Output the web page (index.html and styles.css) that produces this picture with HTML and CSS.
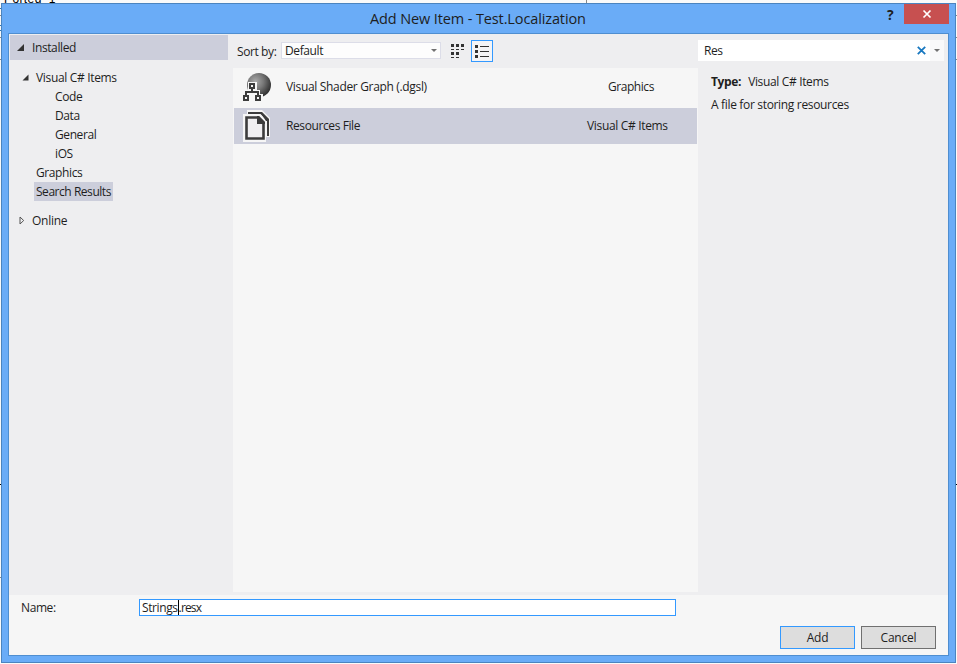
FILE: index.html
```
<!DOCTYPE html>
<html lang="en">
<head>
    <meta charset="utf-8">
    <title>Add New Item - Test.Localization</title>
    <link rel="stylesheet" href="styles.css">
</head>
<body>
    <!-- Window behind the dialog -->
    <div class="backdrop">
        <span class="backdrop-text">Ported_1</span>
        <svg class="backdrop-lines" width="957" height="664" viewBox="0 0 957 664" shape-rendering="crispEdges">
            <path fill="#888" d="M586 0h1v3h-1zM0 15h1v1h-1zM0 37h1v1h-1zM0 59h1v1h-1zM0 577h1v1h-1zM956 15h1v1h-1zM956 37h1v1h-1zM956 59h1v1h-1z"/>
            <path fill="#2f78b5" d="M0 8h1v1h-1zM0 25h1v1h-1zM0 30h1v1h-1z"/>
            <path fill="#000" d="M0 484h1v1h-1zM956 484h1v1h-1z"/>
        </svg>
    </div>

    <div class="dialog">
        <div class="titlebar">
            <h1 class="title">Add New Item - Test.Localization</h1>
            <div class="window-buttons">
                <span class="help">?</span>
                <button class="close" aria-label="Close">
                    <svg width="10" height="10" viewBox="0 0 10 10" stroke="#fff" stroke-width="1.7"><path d="M1.5 1.5l7 7M8.500 1.500l-7 7"/></svg>
                </button>
            </div>
        </div>

        <div class="content">
            <div class="main">
                <div class="sidebar">
                    <div class="section-header">
                        <svg class="arrow" width="7" height="7" viewBox="0 0 7 7"><path fill="#333" d="M7 0v7H0z"/></svg>
                        <span class="label">Installed</span>
                    </div>
                    <ul class="tree">
                        <li class="node level-1">
                            <svg class="arrow" width="7" height="7" viewBox="0 0 7 7"><path fill="#333" d="M6.500 .5v6h-6z"/></svg>
                            <span class="label csharp">Visual C# Items</span>
                        </li>
                        <li class="node level-2"><span class="label">Code</span></li>
                        <li class="node level-2"><span class="label">Data</span></li>
                        <li class="node level-2"><span class="label">General</span></li>
                        <li class="node level-2"><span class="label">iOS</span></li>
                        <li class="node level-1 leaf"><span class="label">Graphics</span></li>
                        <li class="node level-1 leaf"><span class="label selected">Search Results</span></li>
                    </ul>
                    <div class="online">
                        <svg width="6" height="9" viewBox="0 0 6 9"><path fill="none" stroke="#555" d="M1 1v7l3.700-3.500z"/></svg>
                        <span class="label">Online</span>
                    </div>
                </div>

                <div class="templates">
                    <div class="toolbar">
                        <span class="sort-label">Sort by:</span>
                        <div class="sort-select">
                            <span>Default</span>
                            <svg width="6" height="3" viewBox="0 0 6 3"><path fill="#717171" d="M0 0h6L3 3z"/></svg>
                        </div>
                        <button class="view-button medium" aria-label="Medium icons">
                            <svg width="14" height="14" viewBox="0 0 14 14" fill="#333" shape-rendering="crispEdges">
                                <path d="M0 0h3v3H0zM5 0h3v3H5zM10 0h3v3h-3zM0 5h3v1H0zM5 5h3v1H5zM10 5h3v1h-3zM0 8h3v3H0zM5 8h3v3H5zM0 13h3v1H0zM5 13h3v1H5z"/>
                            </svg>
                        </button>
                        <button class="view-button active" aria-label="Small icons">
                            <svg width="14" height="13" viewBox="0 0 14 13" fill="#333" shape-rendering="crispEdges">
                                <path d="M0 0h3v3H0zM5 1h9v1H5zM0 5h3v3H0zM5 6h9v1H5zM0 10h3v3H0zM5 11h9v1H5z"/>
                            </svg>
                        </button>
                    </div>
                    <div class="template-list">
                        <div class="template">
                            <svg class="template-icon" width="30" height="32" viewBox="0 0 30 32">
                                <defs>
                                    <radialGradient id="sphere" cx=".35" cy=".35" r=".68">
                                        <stop offset="0" stop-color="#aaa"/>
                                        <stop offset=".5" stop-color="#777"/>
                                        <stop offset="1" stop-color="#333"/>
                                    </radialGradient>
                                </defs>
                                <circle cx="16" cy="14" r="12" fill="url(#sphere)"/>
                                <path fill="#f6f6f6" d="M5 11h9v8h3v4h3v8H0v-8h1v-4h4z"/>
                                <path fill="#f6f6f6" stroke="#3c3c3c" stroke-width="2" d="M7 13h4v4H7zM1 25h4v4H1zM13 25h4v4h-4z"/>
                                <path fill="none" stroke="#3c3c3c" stroke-width="2" d="M9 18v3M3 24v-3h12v3"/>
                            </svg>
                            <span class="template-name">Visual Shader Graph (.dgsl)</span>
                            <span class="template-type graphics">Graphics</span>
                        </div>
                        <div class="template selected">
                            <svg class="template-icon" width="30" height="32" viewBox="0 0 30 32">
                                <path fill="#f6f6f6" d="M4 0h15l8 8v19h-4v5H0V4h4z"/>
                                <path fill="none" stroke="#3c3c3c" stroke-width="2" d="M5 3h13l7 7v16"/>
                                <path fill="#3c3c3c" d="M17 2h2l7 7v2h-3z"/>
                                <path fill="#f0eff1" stroke="#3c3c3c" stroke-width="2.600" d="M3.500 7.500h12l5 5v16h-17z"/>
                                <path fill="#3c3c3c" d="M14 6h2l6 6v2h-8z"/>
                            </svg>
                            <span class="template-name resources">Resources File</span>
                            <span class="template-type">Visual C# Items</span>
                        </div>
                    </div>
                </div>

                <div class="details">
                    <div class="search">
                        <span class="search-text">Res</span>
                        <svg class="clear" width="9" height="9" viewBox="0 0 9 9" stroke="#1878c0" stroke-width="1.8"><path d="M.8.8l7.400 7.400M8.200.8L.8 8.200"/></svg>
                        <div class="search-drop">
                            <svg width="6" height="3" viewBox="0 0 6 3"><path fill="#717171" d="M0 0h6L3 3z"/></svg>
                        </div>
                    </div>
                    <p class="type"><b>Type:</b><span>Visual C# Items</span></p>
                    <p class="description">A file for storing resources</p>
                </div>
            </div>

            <div class="footer">
                <div class="name-row">
                    <span class="name-label">Name:</span>
                    <div class="name-input"><span>Strings</span><i class="caret"></i><span class="extension">.resx</span></div>
                </div>
                <div class="actions">
                    <button class="button primary">Add</button>
                    <button class="button">Cancel</button>
                </div>
            </div>
        </div>
    </div>
</body>
</html>
```
FILE: styles.css
```
* {
    box-sizing: border-box;
}

body {
    margin: 0;
    width: 957px;
    height: 664px;
    padding: 3px 0 0 1px;
    overflow: hidden;
    background: #f4f4f4;
    color: #1e1e1e;
    font-family: "Open Sans", "Noto Sans", sans-serif;
    font-size: 12px;
    letter-spacing: -0.4px;
    white-space: nowrap;
}

button {
    padding: 0;
    border: none;
    font: inherit;
    letter-spacing: inherit;
    color: inherit;
}

svg {
    display: block;
    flex: none;
}

ul, p, h1 {
    margin: 0;
    padding: 0;
    list-style: none;
}

.backdrop {
    position: absolute;
    top: 0;
    left: 0;
    width: 957px;
    height: 664px;
    overflow: hidden;
    background: #fafafa;
}

.backdrop-text {
    position: absolute;
    top: -9px;
    left: 4px;
    color: #000;
    font: 12px/16px "Liberation Sans", sans-serif;
    letter-spacing: 0.4px;
}

.backdrop-lines {
    position: absolute;
    top: 0;
    left: 0;
}

.dialog {
    position: relative;
    display: flex;
    flex-direction: column;
    width: 955px;
    height: 660px;
    padding: 0 6px 6px;
    border: 1px solid #4b84bf;
    background: #6aacf7;
}

.titlebar {
    display: flex;
    height: 29px;
    flex: none;
    padding-left: 362px;
}

.title {
    font-size: 14.5px;
    font-weight: normal;
    line-height: 30px;
    letter-spacing: -0.12px;
}

.window-buttons {
    display: flex;
    align-items: flex-start;
    margin-left: auto;
}

.help {
    width: 17px;
    font-size: 14px;
    font-weight: bold;
    line-height: 21px;
}

.close {
    display: flex;
    align-items: center;
    justify-content: center;
    width: 45px;
    height: 20px;
    background: #c75050;
}

.content {
    display: flex;
    flex: 1;
    flex-direction: column;
    border: 1px solid #4f8ed0;
    background: #eeeef0;
}

.main {
    display: flex;
    height: 561px;
}

.sidebar {
    width: 219px;
    padding: 1px 0 0 1px;
}

.section-header {
    display: flex;
    align-items: center;
    gap: 8px;
    height: 25px;
    padding-left: 7px;
    background: #cccedb;
}

.tree {
    padding-top: 8px;
}

.node {
    display: flex;
    align-items: center;
    height: 19px;
}

.level-1 {
    gap: 5px;
    padding-left: 12px;
}

.leaf {
    padding-left: 24px;
}

.level-2 {
    padding-left: 43px;
}

.node .label {
    padding: 0 2px;
    line-height: 19px;
}

.node .csharp {
    letter-spacing: -0.33px;
}

.node .selected {
    width: 79px;
    background: #cccedb;
    letter-spacing: -0.46px;
}

.online {
    display: flex;
    align-items: center;
    gap: 7px;
    height: 19px;
    margin-top: 10px;
    padding-left: 9px;
    letter-spacing: -0.25px;
}

.templates {
    width: 470px;
    padding: 6px 0 0 5px;
}

.toolbar {
    display: flex;
    height: 22px;
    padding-left: 4px;
}

.sort-label {
    width: 44px;
    line-height: 24px;
}

.sort-select {
    display: flex;
    align-items: center;
    justify-content: space-between;
    width: 160px;
    height: 17px;
    margin: 2px 5px 0 0;
    padding: 0 3px;
    border: 1px solid #dcdde8;
    background: #fdfdfd;
}

.view-button {
    display: flex;
    align-items: center;
    justify-content: center;
    width: 22px;
    height: 22px;
    margin-right: 3px;
    background: none;
}

.view-button.medium {
    padding-left: 2px;
}

.view-button.active {
    border: 1px solid #3399ff;
    background: #f4f4f6;
}

.template-list {
    height: 524px;
    margin-top: 6px;
    padding: 1px 1px 0;
    background: #f6f6f6;
}

.template {
    display: flex;
    align-items: center;
    height: 36px;
    margin-bottom: 3px;
    padding-left: 9px;
    line-height: 16px;
    letter-spacing: -0.33px;
}

.template.selected {
    background: #cccedb;
}

.template-icon {
    width: 30px;
    margin-right: 13px;
}

.template-name {
    width: 301px;
}

.resources {
    letter-spacing: -0.4px;
}

.graphics {
    padding-left: 21px;
    letter-spacing: -0.45px;
}

.details {
    width: 250px;
    padding: 6px 4px 0 0;
}

.search {
    display: flex;
    align-items: center;
    height: 21px;
    padding-left: 6px;
    background: #fff;
}

.search-text {
    flex: 1;
}

.clear {
    margin-right: 4px;
}

.search-drop {
    display: flex;
    align-items: center;
    justify-content: center;
    width: 14px;
    height: 21px;
    padding-right: 1px;
    background: #f9f9fa;
}

.type {
    display: flex;
    gap: 7px;
    margin: 11px 0 0 13px;
    line-height: 19px;
    letter-spacing: -0.35px;
}

.description {
    margin: 4px 0 0 13px;
    line-height: 19px;
    letter-spacing: -0.33px;
}

.footer {
    flex: 1;
    padding: 4px 12px 0;
    background: #f6f6f6;
}

.name-row {
    display: flex;
    align-items: center;
    height: 17px;
}

.name-label {
    width: 118px;
}

.name-input {
    display: flex;
    align-items: center;
    width: 537px;
    height: 17px;
    padding-left: 2px;
    border: 1px solid #3399ff;
    background: #fff;
    line-height: 15px;
}

.caret {
    width: 1px;
    height: 15px;
    background: #000;
}

.extension {
    letter-spacing: -0.85px;
}

.actions {
    display: flex;
    justify-content: flex-end;
    gap: 6px;
    margin-top: 10px;
}

.button {
    width: 75px;
    height: 23px;
    border: 1px solid #707070;
    background: #ddd;
    letter-spacing: -0.2px;
}

.button.primary {
    border-color: #3399ff;
}
```
